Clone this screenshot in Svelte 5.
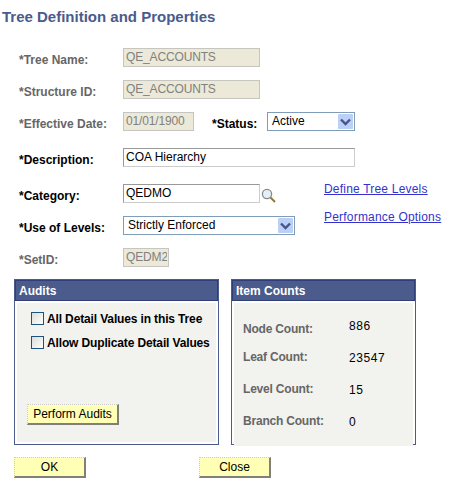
<script>
  const counts = [
    { label: 'Node Count:', value: '886' },
    { label: 'Leaf Count:', value: '23547' },
    { label: 'Level Count:', value: '15' },
    { label: 'Branch Count:', value: '0' },
  ];
</script>

<main class="page">
  <h1>Tree Definition and Properties</h1>

  <div class="row">
    <label class="muted" for="tree">*Tree Name:</label>
    <input id="tree" class="field off w137" value="QE_ACCOUNTS" disabled />
  </div>
  <div class="row">
    <label class="muted" for="struct">*Structure ID:</label>
    <input id="struct" class="field off w137" value="QE_ACCOUNTS" disabled />
  </div>
  <div class="row">
    <label class="muted" for="date">*Effective Date:</label>
    <input id="date" class="field off w71" value="01/01/1900" disabled />
    <span class="status-label">*Status:</span>
    <div class="select w88">
      <span>Active</span>
      <span class="arrow">
        <svg width="11" height="8" viewBox="0 0 11 8"><path d="M1 1.5 5.5 6 10 1.5" fill="none" stroke="#45558a" stroke-width="2.4" /></svg>
      </span>
    </div>
  </div>
  <div class="row gap">
    <label for="desc">*Description:</label>
    <input id="desc" class="field w232" value="COA Hierarchy" />
  </div>

  <div class="split">
    <div>
      <div class="row">
        <label for="cat">*Category:</label>
        <input id="cat" class="field w137" value="QEDMO" />
        <svg class="lookup" width="15" height="15" viewBox="0 0 15 15">
          <circle cx="6" cy="6" r="4.6" fill="#e6eef8" stroke="#858a8c" stroke-width="1.3" />
          <path d="M9.5 9.5 14 14" stroke="#8c7a3c" stroke-width="2" />
        </svg>
      </div>
      <div class="row">
        <span class="label-text">*Use of Levels:</span>
        <div class="select w172">
          <span>Strictly Enforced</span>
          <span class="arrow">
            <svg width="11" height="8" viewBox="0 0 11 8"><path d="M1 1.5 5.5 6 10 1.5" fill="none" stroke="#45558a" stroke-width="2.4" /></svg>
          </span>
        </div>
      </div>
    </div>
    <nav class="links">
      <a href="#levels">Define Tree Levels</a>
      <a href="#options">Performance Options</a>
    </nav>
  </div>

  <div class="row">
    <label class="muted" for="setid">*SetID:</label>
    <input id="setid" class="field off w46" value="QEDM2" disabled />
  </div>

  <div class="panels">
    <section class="panel audits">
      <h2>Audits</h2>
      <div class="body">
        <div class="check"><span class="box"></span>All Detail Values in this Tree</div>
        <div class="check"><span class="box"></span>Allow Duplicate Detail Values</div>
        <button class="btn perform" type="button">Perform Audits</button>
      </div>
    </section>
    <section class="panel counts">
      <h2>Item Counts</h2>
      <div class="body">
        {#each counts as item}
          <div class="count">
            <span class="count-label">{item.label}</span>
            <span class="count-value">{item.value}</span>
          </div>
        {/each}
      </div>
    </section>
  </div>

  <div class="actions">
    <button class="btn wide" type="button">OK</button>
    <button class="btn wide" type="button">Close</button>
  </div>
</main>

<style>
  :global(body) {
    background: #fff;
  }

  .page {
    width: 455px;
    height: 486px;
    box-sizing: border-box;
    padding: 8px 0 0 0;
    font-family: 'Liberation Sans', Arial, sans-serif;
    font-size: 12px;
    color: #000;
    overflow: hidden;
  }

  h1 {
    margin: 0 0 23px 2px;
    font-size: 15px;
    line-height: 17px;
    font-weight: bold;
    color: #4a5b8c;
  }

  .row {
    display: flex;
    align-items: center;
    height: 19px;
    margin-bottom: 13px;
    padding-left: 19px;
  }

  .row.gap {
    margin-top: 17px;
    margin-bottom: 17px;
  }

  label,
  .label-text {
    width: 104px;
    flex: none;
    padding-top: 4px;
    font-weight: bold;
  }

  .muted {
    color: #666;
  }

  .field {
    box-sizing: border-box;
    height: 19px;
    margin: 0;
    padding: 0 1px 2px 2px;
    border: 1px solid #ccc;
    border-top-color: #999;
    border-left-color: #999;
    border-radius: 0;
    background: #fff;
    font: 12px 'Liberation Sans', Arial, sans-serif;
    color: #000;
    outline: none;
  }

  .field.off {
    border: 1px solid #c6c6c0;
    background: #ece9d8;
    color: #808080;
    -webkit-text-fill-color: #808080;
    letter-spacing: -0.15px;
    opacity: 1;
  }

  .w46 { width: 46px; }
  .w71 { width: 71px; }
  .w137 { width: 137px; }
  .w232 { width: 232px; }
  .w88 { width: 88px; }
  .w172 { width: 172px; }

  .status-label {
    width: 55px;
    margin-left: 18px;
    padding-top: 4px;
    font-weight: bold;
  }

  .select {
    box-sizing: border-box;
    display: flex;
    align-items: center;
    justify-content: space-between;
    height: 19px;
    padding: 0 1px 2px 4px;
    border: 1px solid #7f9db9;
    background: #fff;
  }

  .w172 {
    padding-left: 4px;
  }

  .arrow {
    display: flex;
    align-items: center;
    justify-content: center;
    width: 15px;
    height: 15px;
    margin-bottom: -2px;
    border-radius: 1px;
    background: #bcd0f7;
  }

  .lookup {
    margin-left: 1px;
    margin-top: 3px;
  }

  .split {
    display: flex;
  }

  .split > div {
    width: 324px;
    flex: none;
  }

  .links {
    display: flex;
    flex-direction: column;
    gap: 15px;
    margin-top: -1px;
    line-height: 13px;
    letter-spacing: 0.2px;
  }

  .links a {
    color: #3333cc;
    text-decoration: underline;
    white-space: nowrap;
  }

  .panels {
    display: flex;
    gap: 12px;
    margin: -1px 0 12px 14px;
  }

  .panel {
    box-sizing: border-box;
    display: flex;
    flex-direction: column;
    height: 166px;
    border: 1px solid #4a5b8c;
    background: #fff;
  }

  .audits { width: 205px; }
  .counts { width: 185px; }

  h2 {
    box-sizing: border-box;
    height: 21px;
    margin: 0;
    padding-left: 3px;
    border: 1px solid #2f4078;
    background: #4a5b8c;
    color: #fff;
    font-size: 12px;
    line-height: 20px;
    font-weight: bold;
  }

  .body {
    flex: 1;
    margin: 2px;
    background: #f2f2ee;
  }

  .audits .body {
    display: flex;
    flex-direction: column;
    box-sizing: border-box;
    padding: 9px 0 0 14px;
    font-weight: bold;
  }

  .check {
    display: flex;
    align-items: center;
    height: 13px;
    margin-bottom: 11px;
    letter-spacing: -0.14px;
    white-space: nowrap;
  }

  .box {
    box-sizing: border-box;
    width: 13px;
    height: 13px;
    margin-right: 3px;
    border: 1px solid #1c5180;
    background: linear-gradient(135deg, #dcdcd7, #fff);
  }

  .btn {
    box-sizing: border-box;
    margin: 0;
    padding: 0;
    border: 0;
    border-top: 1px dotted #ccc;
    border-left: 1px dotted #ccc;
    border-right: 2px solid #808078;
    border-bottom: 2px solid #808078;
    border-radius: 0;
    background: #ffffb5;
    color: #000;
    font: 12px 'Liberation Sans', Arial, sans-serif;
    text-align: center;
  }

  .perform {
    width: 92px;
    height: 21px;
    margin: 44px 0 0 -4px;
  }

  .counts .body {
    padding-top: 15px;
  }

  .count {
    display: flex;
    height: 32px;
    padding-left: 9px;
  }

  .count-label {
    width: 106px;
    font-weight: bold;
    letter-spacing: -0.2px;
    color: #666;
  }

  .count:first-child .count-label {
    padding-top: 4px;
  }

  .count-value {
    letter-spacing: 0.6px;
    padding-top: 1px;
  }

  .actions {
    display: flex;
    gap: 113px;
    margin-left: 14px;
  }

  .wide {
    width: 72px;
    height: 21px;
  }
</style>
